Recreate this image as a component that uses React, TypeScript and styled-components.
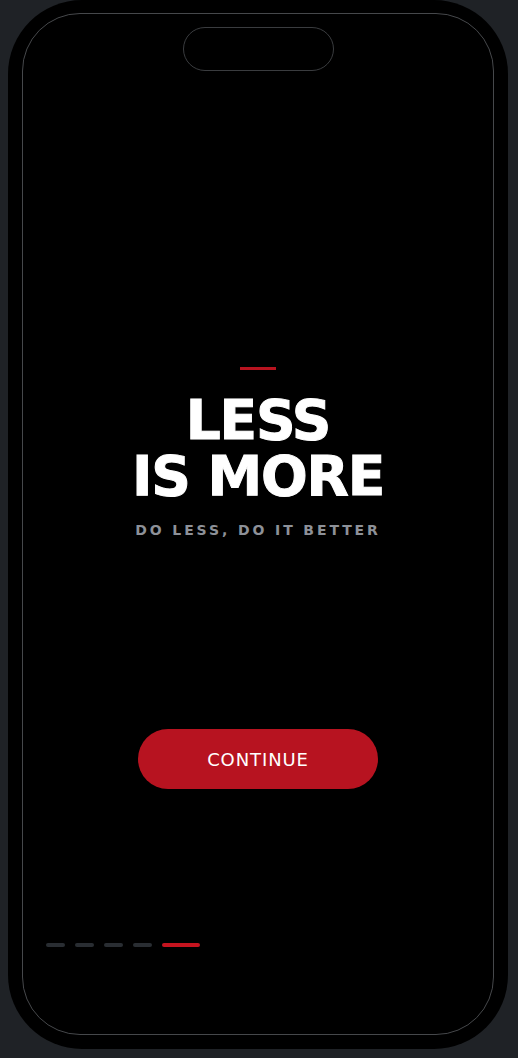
import React from 'react'
import styled, { createGlobalStyle } from 'styled-components'

const GlobalStyle = createGlobalStyle`
	html, body {
		margin: 0;
		padding: 0;
		background: #1f2226;
	}
	body {
		font-family: 'DejaVu Sans', 'Liberation Sans', sans-serif;
		-webkit-font-smoothing: antialiased;
	}
`

const Page = styled.div`
	width: 518px;
	height: 1058px;
	background: #1f2226;
	box-sizing: border-box;
	padding-left: 8px;
	overflow: hidden;
`

const Phone = styled.div`
	width: 500px;
	height: 1049px;
	box-sizing: border-box;
	padding: 13px 14px 14px 14px;
	background: #000;
	border-radius: 74px;
	display: flex;
`

const Screen = styled.div`
	flex: 1;
	border: 1px solid #46484b;
	border-radius: 58px;
	background: #000;
	display: flex;
	flex-direction: column;
	align-items: center;
	box-sizing: border-box;
`

const Notch = styled.div`
	width: 151px;
	height: 44px;
	margin-top: 13px;
	box-sizing: border-box;
	border: 1px solid #3a3c3f;
	border-radius: 22px;
	background: #000;
`

const Hero = styled.div`
	margin-top: 296px;
	display: flex;
	flex-direction: column;
	align-items: center;
`

const Accent = styled.div`
	width: 36px;
	height: 3px;
	background: #b8131f;
`

const Title = styled.h1`
	margin: 22px 0 0;
	font-family: 'DejaVu Sans', 'Liberation Sans', sans-serif;
	font-weight: 700;
	font-size: 55px;
	line-height: 56px;
	letter-spacing: -1.2px;
	color: #fff;
	-webkit-text-stroke: 1px #fff;
	text-align: center;
	text-transform: uppercase;
`

const Subtitle = styled.p`
	margin: 18px 0 0;
	font-weight: 700;
	font-size: 14px;
	line-height: 16px;
	letter-spacing: 2.9px;
	color: #8d9198;
	text-align: center;
`

const ContinueButton = styled.button`
	margin-top: 191px;
	width: 240px;
	height: 60px;
	border: none;
	border-radius: 30px;
	background: #b71320;
	color: #fff;
	font-family: 'DejaVu Sans', 'Liberation Sans', sans-serif;
	font-size: 18px;
	letter-spacing: 0.9px;
	cursor: pointer;
`

const Pager = styled.div`
	margin-top: 154px;
	align-self: stretch;
	padding-left: 23px;
	display: flex;
	gap: 10px;
`

const Dash = styled.span<{ active?: boolean }>`
	width: ${(p) => (p.active ? '38px' : '19px')};
	height: 4px;
	border-radius: 2px;
	background: ${(p) => (p.active ? '#c5141f' : '#292d32')};
`

const pages = [false, false, false, false, true]

const App = () => {
	return (
		<Page>
			<GlobalStyle />
			<Phone>
				<Screen>
					<Notch />
					<Hero>
						<Accent />
						<Title>
							Less
							<br />
							Is More
						</Title>
						<Subtitle>DO LESS, DO IT BETTER</Subtitle>
					</Hero>
					<ContinueButton>CONTINUE</ContinueButton>
					<Pager>
						{pages.map((active, i) => (
							<Dash key={i} active={active} />
						))}
					</Pager>
				</Screen>
			</Phone>
		</Page>
	)
}

export default App
